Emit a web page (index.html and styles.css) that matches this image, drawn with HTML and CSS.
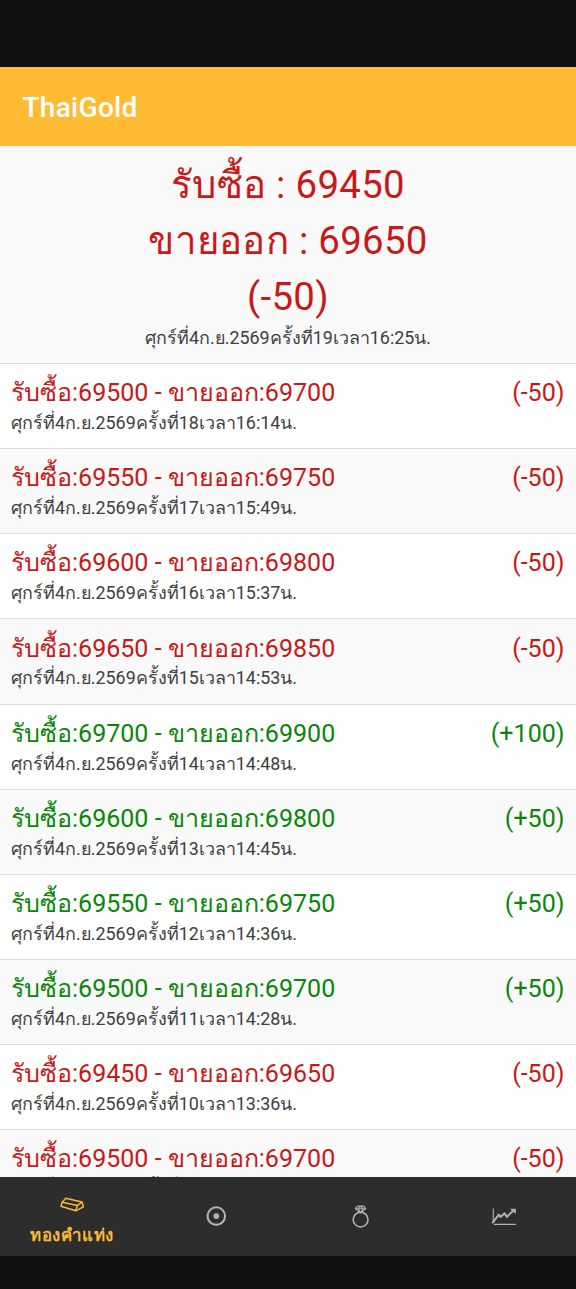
FILE: index.html
```html
<!DOCTYPE html>
<html lang="th">
<head>
<meta charset="utf-8">
<title>ThaiGold</title>
<link rel="stylesheet" href="styles.css">
</head>
<body>
<div class="app">
  <div class="statusbar"></div>
  <header class="toolbar"><h1 class="title">ThaiGold</h1></header>
  <main class="content">
    <section class="summary">
      <div class="summary-price">รับซื้อ : 69450</div>
      <div class="summary-price">ขายออก : 69650</div>
      <div class="summary-price">(-50)</div>
      <div class="date">ศุกร์ที่4ก.ย.2569ครั้งที่19เวลา16:25น.</div>
    </section>
    <article class="row down"><div class="price"><span>รับซื้อ:69500 - ขายออก:69700</span><span>(-50)</span></div><div class="date">ศุกร์ที่4ก.ย.2569ครั้งที่18เวลา16:14น.</div></article>
    <article class="row down"><div class="price"><span>รับซื้อ:69550 - ขายออก:69750</span><span>(-50)</span></div><div class="date">ศุกร์ที่4ก.ย.2569ครั้งที่17เวลา15:49น.</div></article>
    <article class="row down"><div class="price"><span>รับซื้อ:69600 - ขายออก:69800</span><span>(-50)</span></div><div class="date">ศุกร์ที่4ก.ย.2569ครั้งที่16เวลา15:37น.</div></article>
    <article class="row down"><div class="price"><span>รับซื้อ:69650 - ขายออก:69850</span><span>(-50)</span></div><div class="date">ศุกร์ที่4ก.ย.2569ครั้งที่15เวลา14:53น.</div></article>
    <article class="row up"><div class="price"><span>รับซื้อ:69700 - ขายออก:69900</span><span>(+100)</span></div><div class="date">ศุกร์ที่4ก.ย.2569ครั้งที่14เวลา14:48น.</div></article>
    <article class="row up"><div class="price"><span>รับซื้อ:69600 - ขายออก:69800</span><span>(+50)</span></div><div class="date">ศุกร์ที่4ก.ย.2569ครั้งที่13เวลา14:45น.</div></article>
    <article class="row up"><div class="price"><span>รับซื้อ:69550 - ขายออก:69750</span><span>(+50)</span></div><div class="date">ศุกร์ที่4ก.ย.2569ครั้งที่12เวลา14:36น.</div></article>
    <article class="row up"><div class="price"><span>รับซื้อ:69500 - ขายออก:69700</span><span>(+50)</span></div><div class="date">ศุกร์ที่4ก.ย.2569ครั้งที่11เวลา14:28น.</div></article>
    <article class="row down"><div class="price"><span>รับซื้อ:69450 - ขายออก:69650</span><span>(-50)</span></div><div class="date">ศุกร์ที่4ก.ย.2569ครั้งที่10เวลา13:36น.</div></article>
    <article class="row down"><div class="price"><span>รับซื้อ:69500 - ขายออก:69700</span><span>(-50)</span></div><div class="date">ศุกร์ที่4ก.ย.2569ครั้งที่9เวลา13:28น.</div></article>
  </main>
  <nav class="tabs">
    <a class="tab active">
      <svg class="icon" viewBox="0 0 28 28"><path d="M7.8 7.2 24 11 19.3 14.6 4.2 11.2ZM4.2 11.2 2.9 15.2 17.8 19.8 19.3 14.6M17.8 19.8 25.4 15.8 24 11"/></svg>
      <span class="tab-label">ทองคำแท่ง</span>
    </a>
    <a class="tab">
      <svg class="icon" viewBox="0 0 28 28"><circle class="coin" cx="14.3" cy="13.1" r="8.8"/><circle class="dot" cx="14.3" cy="13.1" r="2.9"/></svg>
    </a>
    <a class="tab">
      <svg class="icon" viewBox="0 0 28 28"><circle cx="14.6" cy="16.6" r="7.4"/><path class="fine" d="M11.5 3.1h6.2l2.2 2.6-5.3 4.4-5.3-4.4ZM9.3 5.7h10.6M12.3 5.7l2.3 4.2 2.3-4.2M12.3 5.7l2.3-2.6 2.3 2.6"/></svg>
    </a>
    <a class="tab">
      <svg class="icon" viewBox="0 0 28 28"><path class="fine" d="M3.3 5.6v14.5M3.9 21.4h22"/><path class="trend" d="M2.3 20.2 8.7 11.8l1.9 2 3.8-3.3 2.6 3.2 6.6-6.4"/><path class="arrow" d="M20 5.8h5.8v5.3Z"/></svg>
    </a>
  </nav>
  <div class="system-nav"></div>
</div>
</body>
</html>
```
FILE: styles.css
```css
* { box-sizing: border-box; }
body {
  margin: 0;
  font-family: Roboto, sans-serif;
  background: #111;
}
.app {
  display: flex;
  flex-direction: column;
  height: 1289px;
  overflow: hidden;
}
.statusbar { flex: 0 0 67px; background: #111; }
.toolbar {
  flex: 0 0 79px;
  display: flex;
  align-items: center;
  padding: 2px 22.5px 0;
  background: #ffbb33;
}
.title {
  margin: 0;
  font-size: 28px;
  font-weight: 500;
  line-height: 40px;
  letter-spacing: .3px;
  color: #fff;
}
.content {
  flex: 1 1 0;
  min-height: 0;
  overflow: hidden;
  background: #fff;
}
.summary {
  height: 217px;
  padding-top: 10.5px;
  text-align: center;
  background: #f9f9f9;
}
.summary-price {
  font-size: 38.4px;
  line-height: 56px;
  letter-spacing: .3px;
  color: #c81919;
}
.date {
  font-size: 17.9px;
  line-height: 26px;
  color: #404040;
}
.row {
  height: 85.15px;
  padding: 11.2px 11.5px 0 11px;
  border-top: 1px solid #dedede;
  background: #fff;
}
.row:nth-child(odd) { background: #fff; }
.row:nth-child(odd) { background: #f9f9f9; }
.price {
  display: flex;
  justify-content: space-between;
  font-size: 25.05px;
  line-height: 36px;
}
.row .date { margin-top: -1.2px; }
.down .price { color: #c81919; }
.up .price { color: #0a870a; }
.tabs {
  flex: 0 0 79px;
  display: grid;
  grid-template-columns: repeat(4, 1fr);
  background: #2d2d2d;
}
.tab {
  display: flex;
  flex-direction: column;
  align-items: center;
  justify-content: center;
  color: #b3b3b3;
}
.tab.active {
  justify-content: flex-start;
  padding-top: 14px;
  color: #f9b934;
}
.tab-label {
  font-size: 16.8px;
  font-weight: 700;
  line-height: 24px;
  letter-spacing: .75px;
  margin-top: 4px;
  white-space: nowrap;
}
.icon {
  width: 28px;
  height: 28px;
  fill: none;
  stroke: currentColor;
  stroke-width: 1.5;
  stroke-linejoin: round;
}
.icon .coin { stroke-width: 2.1; }
.icon .dot, .icon .arrow { fill: currentColor; stroke: none; }
.icon .fine { stroke-width: 1.1; }
.icon .trend { stroke-width: 2; stroke-linejoin: miter; }
.system-nav { flex: 0 0 33px; background: #111; }
```
